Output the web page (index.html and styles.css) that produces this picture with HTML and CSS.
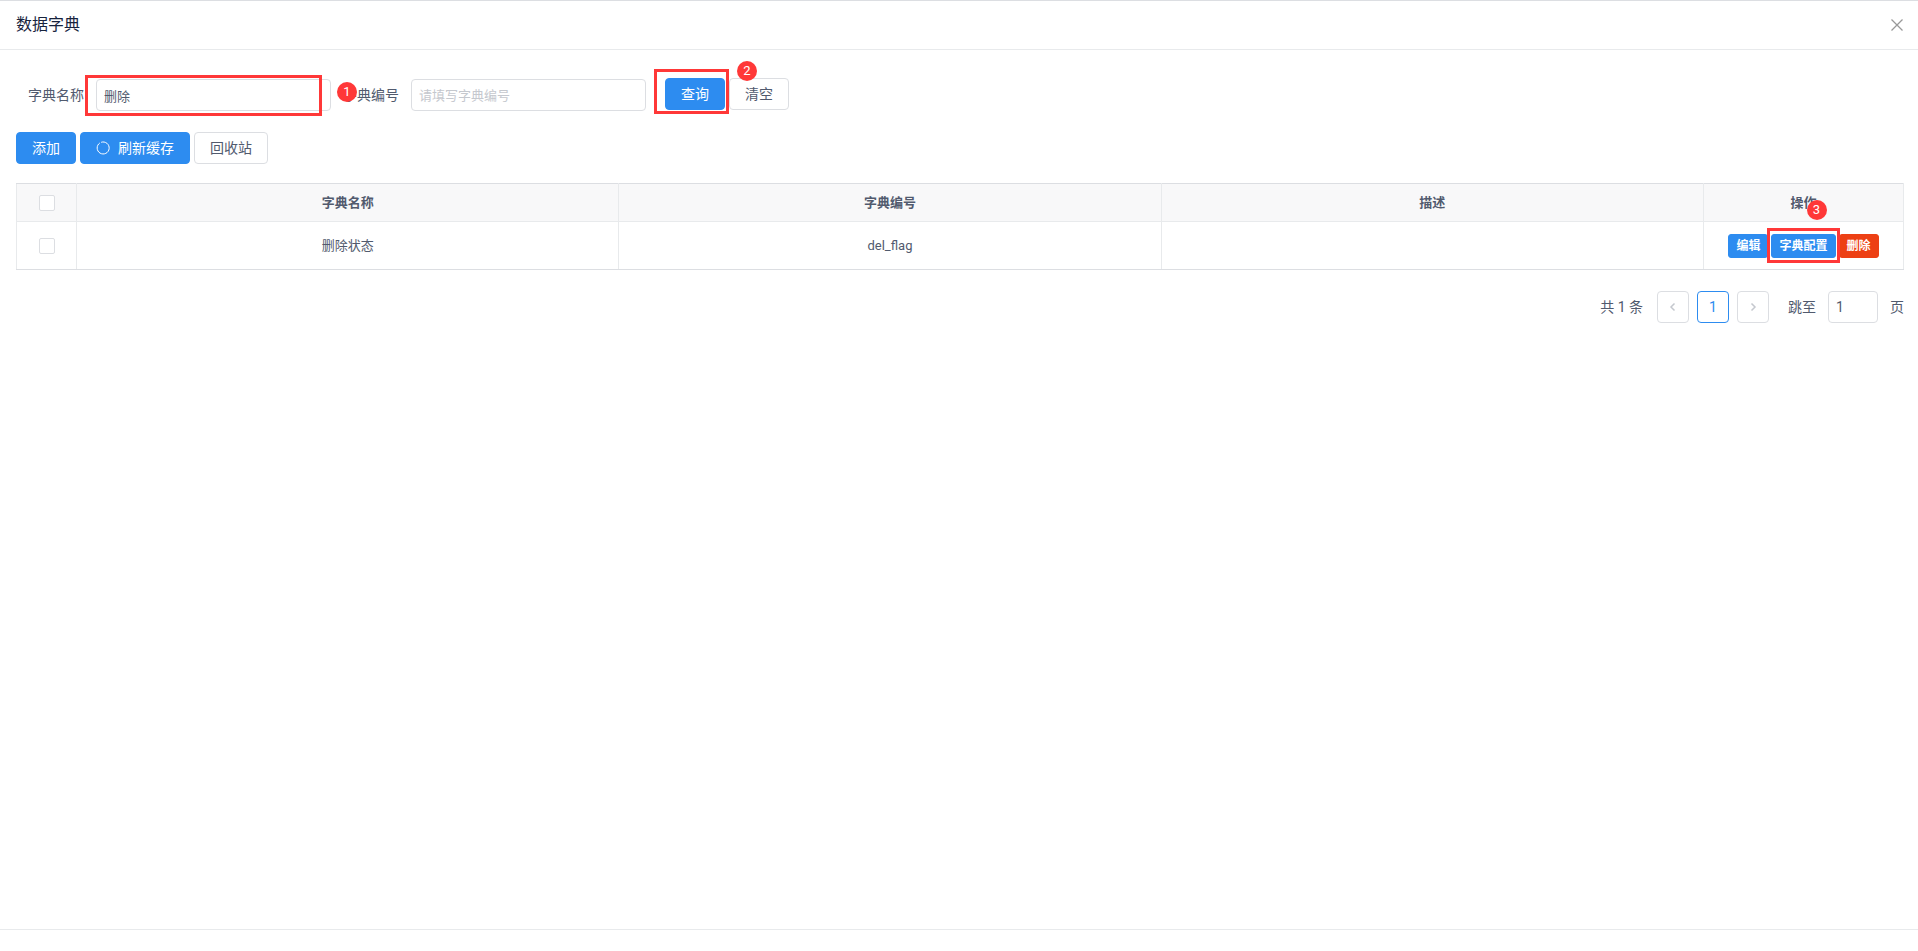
FILE: index.html
```
<!DOCTYPE html>
<html lang="zh-CN">

<head>
    <meta charset="UTF-8">
    <meta name="viewport" content="width=device-width, initial-scale=1.0">
    <title>数据字典</title>
    <link rel="stylesheet" href="styles.css">
</head>

<body>

    <div class="modal">
        <header class="modal-header">
            <h1>数据字典</h1>
            <button type="button" class="close" aria-label="关闭">
                <svg width="14" height="14" viewBox="0 0 14 14"><path d="M1.5 1.5l11 11M12.5 1.5l-11 11" /></svg>
            </button>
        </header>

        <main class="modal-body">
            <form class="search-form">
                <div class="field">
                    <label for="dict-name">字典名称</label>
                    <div class="marked">
                        <input type="text" id="dict-name" class="input" value="删除">
                        <span class="mark mark-name"></span>
                        <span class="badge badge-name">1</span>
                    </div>
                </div>
                <div class="field">
                    <label for="dict-code">字典编号</label>
                    <input type="text" id="dict-code" class="input" placeholder="请填写字典编号">
                </div>
                <div class="form-actions">
                    <div class="marked">
                        <button type="button" class="btn btn-primary">查询</button>
                        <span class="mark mark-search"></span>
                        <span class="badge badge-search">2</span>
                    </div>
                    <button type="reset" class="btn">清空</button>
                </div>
            </form>

            <div class="toolbar">
                <button type="button" class="btn btn-primary">添加</button>
                <button type="button" class="btn btn-primary">
                    <svg class="icon-refresh" width="14" height="14" viewBox="0 0 14 14"><path d="M3.8 2A6 6 0 1 0 5.2 1.3" /></svg>
                    刷新缓存
                </button>
                <button type="button" class="btn">回收站</button>
            </div>

            <table class="table">
                <thead>
                    <tr>
                        <th class="col-check"><input type="checkbox" class="checkbox" aria-label="全选"></th>
                        <th>字典名称</th>
                        <th>字典编号</th>
                        <th>描述</th>
                        <th class="col-action">操作</th>
                    </tr>
                </thead>
                <tbody>
                    <tr>
                        <td><input type="checkbox" class="checkbox" aria-label="选择 删除状态"></td>
                        <td>删除状态</td>
                        <td>del_flag</td>
                        <td></td>
                        <td>
                            <div class="row-actions">
                                <button type="button" class="btn btn-small btn-primary">编辑</button>
                                <div class="marked">
                                    <button type="button" class="btn btn-small btn-primary">字典配置</button>
                                    <span class="mark mark-config"></span>
                                    <span class="badge badge-config">3</span>
                                </div>
                                <button type="button" class="btn btn-small btn-error">删除</button>
                            </div>
                        </td>
                    </tr>
                </tbody>
            </table>

            <nav class="pagination" aria-label="分页">
                <span class="total">共 1 条</span>
                <div class="pages">
                    <button type="button" class="page" aria-label="上一页" disabled>
                        <svg width="8" height="10" viewBox="0 0 8 10"><path d="M5.5 1.5L2 5l3.5 3.5" /></svg>
                    </button>
                    <button type="button" class="page page-active">1</button>
                    <button type="button" class="page" aria-label="下一页" disabled>
                        <svg width="8" height="10" viewBox="0 0 8 10"><path d="M2.5 1.5L6 5L2.5 8.5" /></svg>
                    </button>
                </div>
                <div class="jump">
                    <label for="page-jump">跳至</label>
                    <input type="text" id="page-jump" class="input input-page" value="1">
                    <span>页</span>
                </div>
            </nav>
        </main>

        <footer class="modal-footer"></footer>
    </div>

</body>

</html>
```
FILE: styles.css
```
* {
    box-sizing: border-box;
}

body {
    margin: 0;
    font-family: Roboto, "Noto Sans CJK SC", sans-serif;
    font-size: 14px;
    line-height: 20px;
    color: #515a6e;
    background-color: #fff;
}

button,
input {
    font-family: inherit;
    color: inherit;
    margin: 0;
}

.modal {
    display: flex;
    flex-direction: column;
    min-height: 100vh;
    border-top: 1px solid #dcdee2;
}

.modal-header {
    display: flex;
    justify-content: space-between;
    align-items: center;
    height: 49px;
    padding: 0 14px 0 16px;
    border-bottom: 1px solid #e8eaec;
}

h1 {
    margin: 0;
    font-size: 16px;
    font-weight: normal;
    color: #17233d;
}

.close {
    display: flex;
    padding: 0;
    border: none;
    background: none;
    cursor: pointer;
}

.close svg {
    fill: none;
    stroke: #999;
    stroke-width: 1.3;
}

.modal-body {
    flex: 1;
    padding: 28px 14px 16px 16px;
}

.modal-footer {
    height: 22px;
    border-top: 1px solid #e8eaec;
}

/* search form */
.search-form {
    display: flex;
    align-items: flex-start;
    gap: 12px;
    padding-left: 12px;
    margin-bottom: 21px;
}

.field {
    display: flex;
    align-items: center;
    gap: 12px;
    padding-top: 1px;
}

.form-actions {
    display: flex;
    gap: 4px;
    padding-left: 7px;
}

.input {
    display: block;
    width: 235px;
    height: 32px;
    padding: 0 7px;
    border: 1px solid #dcdee2;
    border-radius: 4px;
    font-size: 13px;
    background-color: #fff;
}

.input::placeholder {
    color: #c5c8ce;
}

.btn {
    display: flex;
    align-items: center;
    height: 32px;
    padding: 0 15px;
    border: 1px solid #dcdee2;
    border-radius: 4px;
    font-size: 14px;
    line-height: 18px;
    background-color: #fff;
    cursor: pointer;
}

.btn-primary {
    color: #fff;
    background-color: #2d8cf0;
    border-color: #2d8cf0;
}

.btn-error {
    color: #fff;
    background-color: #ed4014;
    border-color: #ed4014;
}

.btn-small {
    height: 24px;
    padding: 0 7px;
    border-radius: 3px;
    font-size: 12px;
    font-weight: bold;
}

.toolbar {
    display: flex;
    gap: 4px;
    margin-bottom: 19px;
}

.icon-refresh {
    margin-right: 8px;
    fill: none;
    stroke: #fff;
}

/* table */
.table {
    width: 100%;
    table-layout: fixed;
    border-collapse: collapse;
    border: 1px solid #dcdee2;
    font-size: 13px;
}

.table th,
.table td {
    padding: 0;
    text-align: center;
    border: 1px solid #e8eaec;
}

.table th {
    height: 38px;
    font-weight: bold;
    background-color: #f8f8f9;
}

.table thead th {
    border-top-color: #dcdee2;
}

.table tbody td {
    height: 48px;
    border-bottom-color: #dcdee2;
}

.table .col-check {
    width: 60px;
}

.table .col-action {
    width: 200px;
}

.checkbox {
    display: block;
    appearance: none;
    width: 16px;
    height: 16px;
    margin: 0 auto;
    border: 1px solid #dcdee2;
    border-radius: 2px;
    background-color: #fff;
}

.checkbox:checked {
    background-color: #2d8cf0;
}

.row-actions {
    display: flex;
    justify-content: center;
    gap: 3px;
}

/* pagination */
.pagination {
    display: flex;
    justify-content: flex-end;
    align-items: center;
    margin-top: 21px;
}

.pages {
    display: flex;
    gap: 8px;
    margin: 0 19px 0 14px;
}

.page {
    display: flex;
    justify-content: center;
    align-items: center;
    width: 32px;
    height: 32px;
    padding: 0;
    border: 1px solid #dcdee2;
    border-radius: 4px;
    font-size: 14px;
    background-color: #fff;
}

.page svg {
    fill: none;
    stroke: #c5c8ce;
    stroke-width: 1.5;
}

.page-active {
    color: #2d8cf0;
    border-color: #2d8cf0;
}

.jump {
    display: flex;
    align-items: center;
    gap: 12px;
}

.input-page {
    width: 50px;
    font-size: 14px;
}

/* numbered step marks over the controls */
.marked {
    position: relative;
}

.mark {
    position: absolute;
    border: 3px solid #ff3838;
    pointer-events: none;
}

.badge {
    position: absolute;
    z-index: 1;
    width: 20px;
    height: 20px;
    border-radius: 50%;
    color: #fff;
    font-size: 13px;
    text-align: center;
    background-color: #ff3838;
}

.mark-name {
    inset: -4px 9px -5px -11px;
}

.badge-name {
    top: 3px;
    right: -26px;
}

.mark-search {
    inset: -9px -4px -4px -11px;
}

.badge-search {
    top: -17px;
    right: -32px;
}

.mark-config {
    inset: -6px -4px -5px -4px;
}

.badge-config {
    top: -34px;
    right: 9px;
}
```
